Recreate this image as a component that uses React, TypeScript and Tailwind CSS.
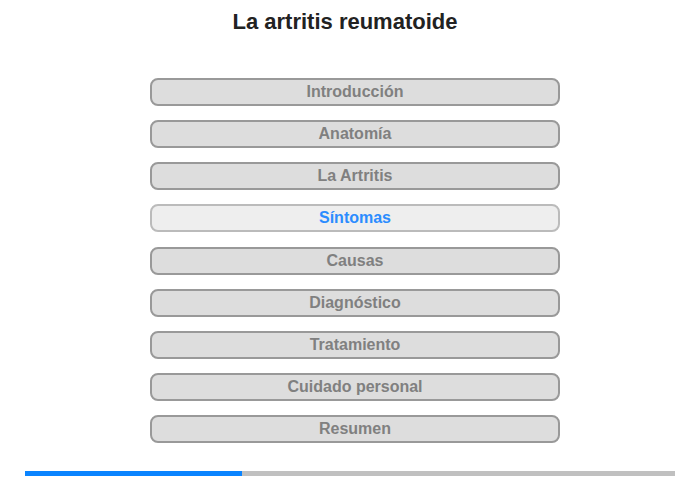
import React from 'react';

const sections = [
  'Introducción',
  'Anatomía',
  'La Artritis',
  'Síntomas',
  'Causas',
  'Diagnóstico',
  'Tratamiento',
  'Cuidado personal',
  'Resumen',
];

const current = 3;

export default function App() {
  return (
    <div className="w-[700px] h-[480px] bg-white flex flex-col" style={{ fontFamily: '"Liberation Sans", Arial, sans-serif' }}>
      <h1 className="pt-[9px] pr-[10px] text-center text-[22px] leading-[26px] font-bold text-[#222222]">
        La artritis reumatoide
      </h1>

      <div className="mt-[43px] ml-[150px] w-[410px] flex flex-col gap-[14.125px]">
        {sections.map((name, i) => (
          <button
            key={name}
            className={
              i === current
                ? 'h-[28px] rounded-[8px] border-2 border-[#bbbbbb] bg-[#eeeeee] text-[#2b8cff] text-[16px] leading-[22px] pt-[1px] pb-[1px] font-bold text-center'
                : 'h-[28px] rounded-[8px] border-2 border-[#999999] bg-[#dddddd] text-[#808080] text-[16px] leading-[22px] pt-[1px] pb-[1px] font-bold text-center'
            }
          >
            {name}
          </button>
        ))}
      </div>

      <div className="mt-[28px] ml-[25px] w-[650px] h-[5px] bg-[#c0c0c0] flex">
        <div className="h-full bg-[#0a84ff]" style={{ width: `${((current + 1) / 12) * 100}%` }} />
      </div>
    </div>
  );
}
